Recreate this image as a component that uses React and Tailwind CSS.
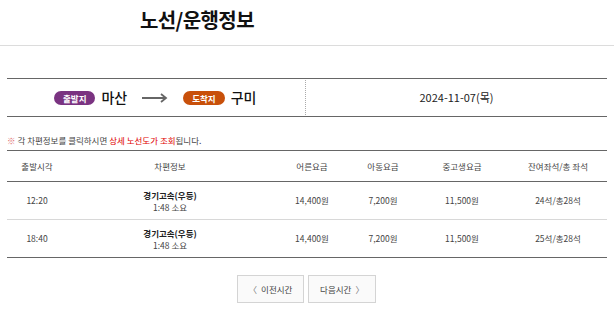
const ROWS = [
  { time: '12:20', company: '경기고속(우등)', duration: '1:48 소요', adult: '14,400원', child: '7,200원', teen: '11,500원', seats: '24석/총28석' },
  { time: '18:40', company: '경기고속(우등)', duration: '1:48 소요', adult: '14,400원', child: '7,200원', teen: '11,500원', seats: '25석/총28석' },
]

const COLS = 'grid grid-cols-[60px_206px_78px_64px_94px_98px]'

export default function App() {
  return (
    <div className="w-[614px] h-[310px] bg-white text-[#333] overflow-hidden" style={{ fontFamily: '"Noto Sans CJK KR", "Noto Sans", sans-serif' }}>
      {/* ── Title ── */}
      <div className="h-[46px] border-b border-[#dcdcdc] flex items-center pl-[140px]">
        <h1 className="text-[20px] font-bold text-[#111] leading-none tracking-[-0.6px] -mt-[6px]">노선/운행정보</h1>
      </div>

      <div className="px-[7px] pt-[32px]">
        {/* ── Route ── */}
        <div className="h-[39px] border-y border-[#666] flex">
          <div className="w-[299px] flex items-center pl-[47px] gap-[6px] border-r border-dotted border-[#aaa] my-[1px]">
            <span className="h-[14px] px-[9px] rounded-full bg-[#7a3381] text-white text-[8.5px] font-bold leading-[14px]">출발지</span>
            <span className="text-[14px] font-medium text-[#111]">마산</span>
            <svg width="26" height="10" viewBox="0 0 26 10" className="mx-[9px]">
              <path d="M0 5H24M19 1L24 5L19 9" fill="none" stroke="#666" strokeWidth="1.8" />
            </svg>
            <span className="h-[14px] px-[9px] rounded-full bg-[#c8500a] text-white text-[8.5px] font-bold leading-[14px]">도착지</span>
            <span className="text-[14px] font-medium text-[#111]">구미</span>
          </div>
          <div className="flex-1 flex items-center justify-center text-[11px] text-[#222]">2024-11-07(목)</div>
        </div>

        {/* ── Notice ── */}
        <p className="mt-[18px] text-[8.5px] text-[#444] leading-[10px]">
          <span className="text-[#e07070]">※</span> 각 차편정보를 클릭하시면 <span className="text-[#e00000]">상세 노선도가 조회</span>됩니다.
        </p>

        {/* ── Table ── */}
        <div className="mt-[5px] border-t border-[#666] text-[8.5px] text-[#444]">
          <div className={`${COLS} h-[31px] items-center text-center border-b border-[#666]`}>
            <span>출발시각</span>
            <span>차편정보</span>
            <span>어른요금</span>
            <span>아동요금</span>
            <span>중고생요금</span>
            <span>잔여좌석/총 좌석</span>
          </div>
          {ROWS.map((r, i) => (
            <div
              key={r.time}
              className={`${COLS} h-[38px] items-center text-center ${i === ROWS.length - 1 ? 'border-b border-[#666]' : 'border-b border-[#d8d8d8]'}`}
            >
              <span>{r.time}</span>
              <div className="flex flex-col leading-[12px]">
                <span className="font-bold text-[#222]">{r.company}</span>
                <span>{r.duration}</span>
              </div>
              <span>{r.adult}</span>
              <span>{r.child}</span>
              <span>{r.teen}</span>
              <span>{r.seats}</span>
            </div>
          ))}
        </div>

        {/* ── Paging ── */}
        <div className="mt-[17px] flex justify-center gap-[4px] pr-[1px]">
          <button className="w-[67px] h-[28px] border border-[#d4d4d4] bg-[#fafafa] text-[8.5px] text-[#444] flex items-center justify-center gap-[4px]">
            <span className="text-[#777]">〈</span>이전시간
          </button>
          <button className="w-[68px] h-[28px] border border-[#d4d4d4] bg-[#fafafa] text-[8.5px] text-[#444] flex items-center justify-center gap-[4px]">
            다음시간<span className="text-[#777]">〉</span>
          </button>
        </div>
      </div>
    </div>
  )
}
